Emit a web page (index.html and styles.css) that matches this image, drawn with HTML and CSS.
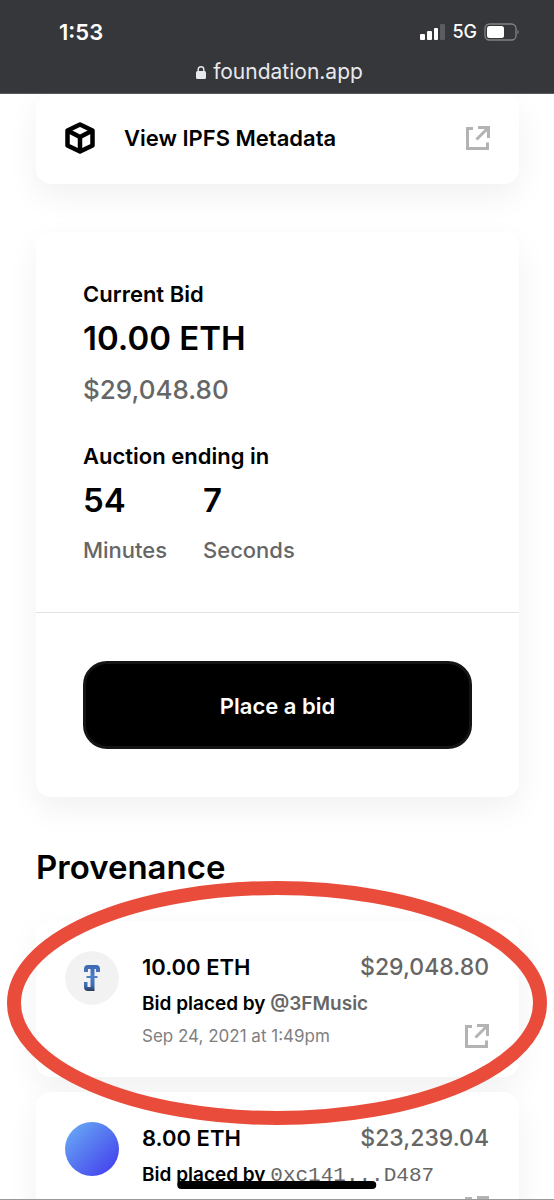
FILE: index.html
```html
<!DOCTYPE html>
<html lang="en">
<head>
<meta charset="utf-8">
<meta name="viewport" content="width=device-width, initial-scale=1">
<title>foundation.app</title>
<link rel="stylesheet" href="styles.css">
</head>
<body>
<svg class="defs" width="0" height="0" aria-hidden="true">
  <symbol id="external" viewBox="0 0 24 24">
    <path d="M7 2.500H1.500V22.500H21.500V16.500M12 1.500H22.500V12M22 2L10.500 13.500" fill="none" stroke="#b3b3b3" stroke-width="3"/>
  </symbol>
</svg>
<div class="screen">
  <header class="browser">
    <div class="status">
      <span class="time">1:53</span>
      <div class="signals">
        <svg width="25" height="17" viewBox="0 0 25 17" aria-hidden="true">
          <rect x="0" y="10" width="5" height="6" rx="1" fill="#fff"/>
          <rect x="7" y="7" width="5" height="9" rx="1" fill="#fff"/>
          <rect x="14" y="4" width="4" height="12" rx="1" fill="#fff"/>
          <rect x="20" y="0" width="5" height="16" rx="1" fill="#5b5c5f"/>
        </svg>
        <span class="network">5G</span>
        <svg width="36" height="18" viewBox="0 0 36 18" aria-hidden="true">
          <rect x="1" y="1" width="31" height="16" rx="4.500" fill="none" stroke="#828386" stroke-width="1.300"/>
          <rect x="3" y="3" width="17" height="12" rx="2.500" fill="#fff"/>
          <path d="M33.500 6.500Q36 9 33.500 11.500Z" fill="#828386"/>
        </svg>
      </div>
    </div>
    <a class="address" href="#">
      <svg width="10" height="13" viewBox="0 0 10 13" aria-hidden="true">
        <rect x="0" y="5" width="10" height="8" rx="1.500" fill="#e8e9ed"/>
        <path d="M2.200 6V3.500a2.800 2.800 0 0 1 5.600 0V6" fill="none" stroke="#e8e9ed" stroke-width="1.400"/>
      </svg>
      <span>foundation.app</span>
    </a>
  </header>

  <main class="page">
    <a class="card metadata" href="#">
      <svg class="cube" width="30" height="32" viewBox="0 0 30 32" fill="none" stroke="#000" stroke-width="4.500" stroke-linejoin="round" aria-hidden="true">
        <path d="M15 2.500L27.500 8.500V23.500L15 29.500L2.500 23.500V8.500ZM2.500 8.500L15 15L27.500 8.500M15 15V29.500"/>
      </svg>
      <span class="grow">View IPFS Metadata</span>
      <svg class="external" aria-hidden="true"><use href="#external"/></svg>
    </a>

    <section class="card auction">
      <div class="details">
        <h2 class="label">Current Bid</h2>
        <p class="figure">10.00 ETH</p>
        <p class="fiat">$29,048.80</p>
        <h2 class="label ending">Auction ending in</h2>
        <div class="timer">
          <div><p class="figure">54</p><p class="unit">Minutes</p></div>
          <div><p class="figure">7</p><p class="unit">Seconds</p></div>
        </div>
      </div>
      <div class="action"><button class="bid" type="button">Place a bid</button></div>
    </section>

    <section class="provenance">
      <h1 class="title">Provenance</h1>
      <div class="history">
        <article class="card entry">
          <svg class="avatar" viewBox="0 0 54 54" aria-hidden="true">
            <defs><linearGradient id="mark" x1="0" y1="0" x2="0" y2="1"><stop offset="0" stop-color="#3f66b0"/><stop offset=".45" stop-color="#4c7fc6"/><stop offset=".8" stop-color="#3f69ae"/><stop offset="1" stop-color="#2b3a59"/></linearGradient></defs>
            <circle cx="27" cy="27" r="27" fill="#f2f2f2"/>
            <path d="M19 21V18Q19 14 23 14H31Q35 14 35 18V21H31V18H29.500V25H32.500V27H29.500V40H23Q19 40 19 36V31H22.500V36H25.500V27H21.500V25H25.500V18H23V21Z" fill="url(#mark)"/>
          </svg>
          <div class="info">
            <div class="row amount"><strong>10.00 ETH</strong><span class="muted">$29,048.80</span></div>
            <p class="bidder">Bid placed by <a href="#">@3FMusic</a></p>
            <div class="row"><time class="date" datetime="2021-09-24T13:49">Sep 24, 2021 at 1:49pm</time><a href="#" class="open" aria-label="View transaction"><svg class="external" aria-hidden="true"><use href="#external"/></svg></a></div>
          </div>
        </article>
        <article class="card entry">
          <span class="avatar gradient"></span>
          <div class="info">
            <div class="row amount"><strong>8.00 ETH</strong><span class="muted">$23,239.04</span></div>
            <p class="bidder">Bid placed by <a class="wallet" href="#">0xc141...D487</a></p>
            <div class="row end"><a href="#" class="open" aria-label="View transaction"><svg class="external" aria-hidden="true"><use href="#external"/></svg></a></div>
          </div>
        </article>
        <svg class="highlight" viewBox="0 0 540 244" preserveAspectRatio="none" aria-hidden="true">
          <ellipse cx="270" cy="122" rx="263" ry="115" fill="none" stroke="#ea4c3b" stroke-width="14"/>
        </svg>
      </div>
    </section>
  </main>
  <div class="home"></div>
</div>
</body>
</html>
```
FILE: styles.css
```css
* { box-sizing: border-box; }

body {
  margin: 0;
  background: #fff;
  color: #000;
  font-family: Inter, "Liberation Sans", sans-serif;
  font-size: 22px;
  font-weight: 500;
  line-height: 28px;
}

h1, h2, p { margin: 0; font-weight: inherit; }
a { color: inherit; text-decoration: none; }
svg { display: block; flex: none; }
.defs { position: absolute; }

.screen {
  position: relative;
  display: flex;
  flex-direction: column;
  height: 100vh;
  overflow: hidden;
  border-bottom: 1px solid #999;
}

.browser {
  position: relative;
  z-index: 1;
  flex: none;
  padding: 18px 34px 7px 59px;
  background: #36373b;
  color: #fff;
  border-bottom: 1px solid #58595c;
}
.status { display: flex; justify-content: space-between; align-items: center; }
.time { font-weight: 600; }
.signals { display: flex; align-items: center; gap: 7px; }
.network { font-size: 18px; }
.address {
  display: flex;
  justify-content: center;
  align-items: center;
  gap: 7px;
  margin: 12px 0 0 -20px;
  color: #e8e9ed;
  font-size: 21px;
  font-weight: 400;
}

.page { padding: 0 35px 0 36px; }

.card {
  display: block;
  background: #fff;
  border-radius: 15px;
  box-shadow: 0 12px 32px rgba(0, 0, 0, 0.06);
}

.metadata {
  display: flex;
  align-items: center;
  padding: 28px 29px 30px;
  font-weight: 600;
}
.cube { margin-right: 29px; }
.grow { flex: 1; }
.external { width: 24px; height: 24px; }

.auction { margin-top: 48px; }
.details { padding: 48px 47px; }
.label { font-size: 22px; font-weight: 600; }
.figure { margin-top: 8px; font-size: 33px; font-weight: 600; line-height: 44px; }
.fiat { margin-top: 14px; font-size: 26px; line-height: 32px; color: #666; }
.ending { margin-top: 36px; }
.timer { display: grid; grid-template-columns: 120px 120px; }
.unit { margin-top: 14px; color: #666; }
.action { padding: 48px 47px; border-top: 1px solid #e2e2e2; }
.bid {
  display: block;
  width: 100%;
  padding: 28px 27px 26px;
  border: 3px solid #131514;
  border-radius: 24px;
  background: #000;
  color: #fff;
  font: inherit;
  font-weight: 600;
}

.provenance { margin-top: 48px; }
.title { font-size: 33px; font-weight: 600; line-height: 44px; }
.history { position: relative; display: grid; gap: 15px; margin-top: 32px; }
.entry { display: flex; gap: 23px; padding: 30px 30px 29px 29px; }
.avatar { flex: none; width: 54px; height: 54px; border-radius: 50%; }
.gradient { background: linear-gradient(135deg, #66a5f3 10%, #4543ee 90%); }
.info { flex: 1; min-width: 0; }
.row { display: flex; justify-content: space-between; align-items: center; }
.end { justify-content: flex-end; }
.amount { line-height: 32px; }
.amount strong { font-weight: 600; }
.muted { color: #666; font-size: 23px; }
.bidder { margin: 7px 0 6px; font-size: 19px; font-weight: 600; white-space: nowrap; }
.bidder a { color: #666; }
.bidder .wallet { font-family: "Liberation Mono", monospace; font-size: 21px; font-weight: 400; }
.date { font-size: 17px; font-weight: 400; line-height: 24px; color: #808080; }

.highlight {
  position: absolute;
  top: -40px;
  left: -29px;
  width: calc(100% + 57px);
  height: 244px;
  pointer-events: none;
}

.home {
  position: absolute;
  bottom: 10px;
  left: 50%;
  width: 36%;
  height: 8px;
  border-radius: 4px;
  background: #000;
  transform: translateX(-50%);
}
```
